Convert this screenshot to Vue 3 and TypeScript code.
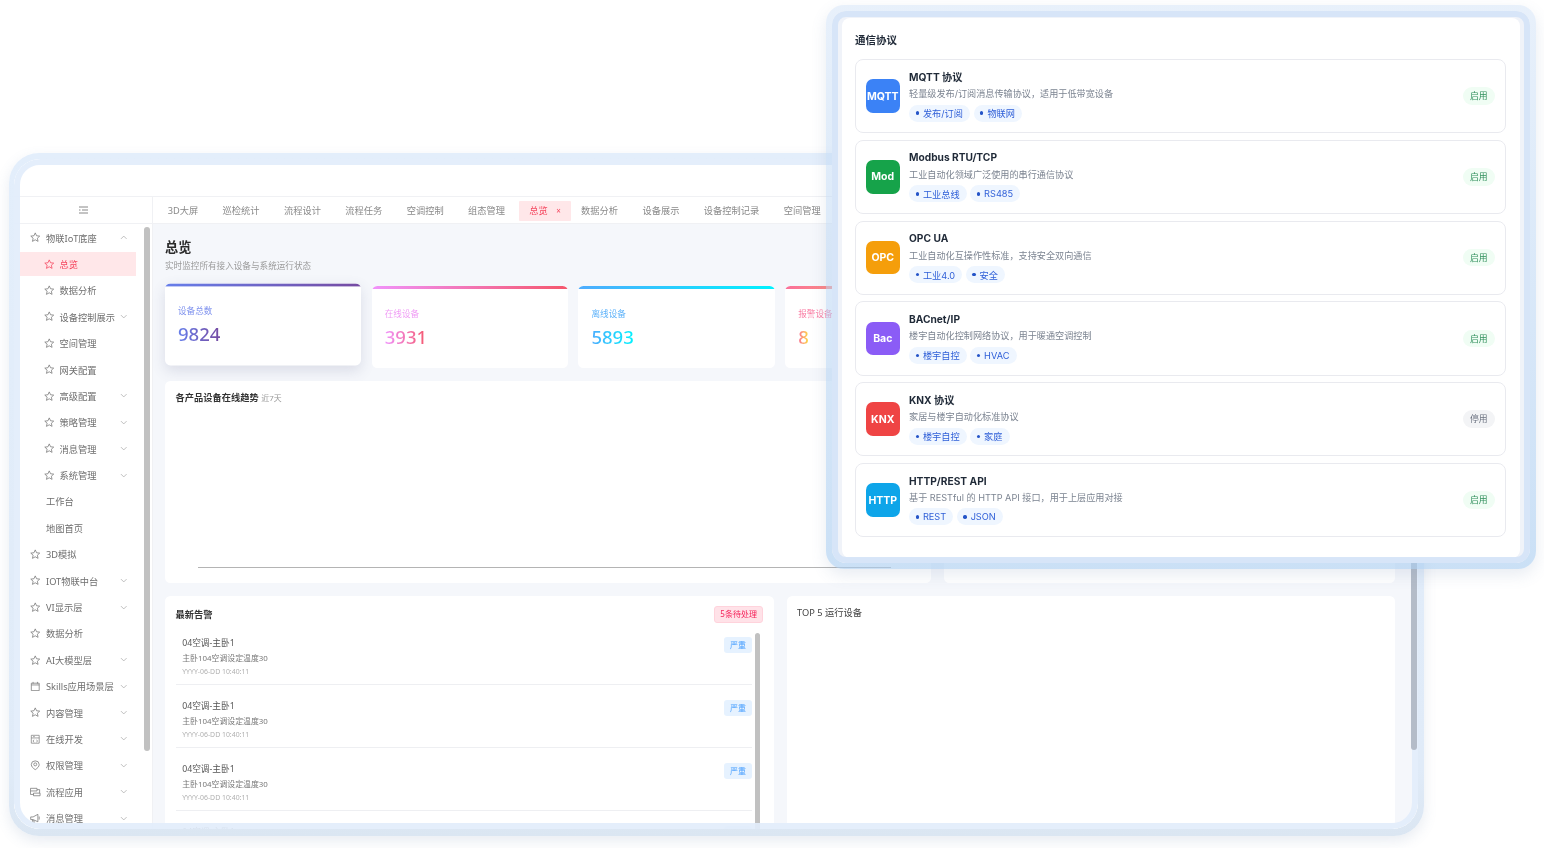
<script setup lang="ts">
interface MenuItem { label: string; icon?: string; sub?: boolean; arrow?: 'up' | 'down'; active?: boolean }

const menu: MenuItem[] = [
  { label: '物联IoT底座', icon: 'star', arrow: 'up' },
  { label: '总览', icon: 'star', sub: true, active: true },
  { label: '数据分析', icon: 'star', sub: true },
  { label: '设备控制展示', icon: 'star', sub: true, arrow: 'down' },
  { label: '空间管理', icon: 'star', sub: true },
  { label: '网关配置', icon: 'star', sub: true },
  { label: '高级配置', icon: 'star', sub: true, arrow: 'down' },
  { label: '策略管理', icon: 'star', sub: true, arrow: 'down' },
  { label: '消息管理', icon: 'star', sub: true, arrow: 'down' },
  { label: '系统管理', icon: 'star', sub: true, arrow: 'down' },
  { label: '工作台' },
  { label: '地图首页' },
  { label: '3D模拟', icon: 'star' },
  { label: 'IOT物联中台', icon: 'star', arrow: 'down' },
  { label: 'VI显示层', icon: 'star', arrow: 'down' },
  { label: '数据分析', icon: 'star' },
  { label: 'AI大模型层', icon: 'star', arrow: 'down' },
  { label: 'Skills应用场景层', icon: 'calendar', arrow: 'down' },
  { label: '内容管理', icon: 'star', arrow: 'down' },
  { label: '在线开发', icon: 'code', arrow: 'down' },
  { label: '权限管理', icon: 'pin', arrow: 'down' },
  { label: '流程应用', icon: 'flow', arrow: 'down' },
  { label: '消息管理', icon: 'horn', arrow: 'down' },
]

const tabs = ['3D大屏', '巡检统计', '流程设计', '流程任务', '空调控制', '组态管理', '总览', '数据分析', '设备展示', '设备控制记录', '空间管理']

const stats = [
  { label: '设备总数', value: '9824', cls: 'purple' },
  { label: '在线设备', value: '3931', cls: 'pink' },
  { label: '离线设备', value: '5893', cls: 'blue' },
  { label: '报警设备', value: '8', cls: 'orange' },
]

const alerts = [1, 2, 3, 4]

const protocols = [
  { short: 'MQTT', color: '#3b82f6', name: 'MQTT 协议', desc: '轻量级发布/订阅消息传输协议，适用于低带宽设备', tags: ['发布/订阅', '物联网'], on: true },
  { short: 'Mod', color: '#16a34a', name: 'Modbus RTU/TCP', desc: '工业自动化领域广泛使用的串行通信协议', tags: ['工业总线', 'RS485'], on: true },
  { short: 'OPC', color: '#f59e0b', name: 'OPC UA', desc: '工业自动化互操作性标准，支持安全双向通信', tags: ['工业4.0', '安全'], on: true },
  { short: 'Bac', color: '#8b5cf6', name: 'BACnet/IP', desc: '楼宇自动化控制网络协议，用于暖通空调控制', tags: ['楼宇自控', 'HVAC'], on: true },
  { short: 'KNX', color: '#ef4444', name: 'KNX 协议', desc: '家居与楼宇自动化标准协议', tags: ['楼宇自控', '家庭'], on: false },
  { short: 'HTTP', color: '#0ea5e9', name: 'HTTP/REST API', desc: '基于 RESTful 的 HTTP API 接口，用于上层应用对接', tags: ['REST', 'JSON'], on: true },
]
</script>

<template>
  <div class="desk">
    <section class="win back">
      <div class="screen">
        <div class="topbar"></div>
        <div class="body">
          <aside class="side">
            <div class="side-head">
              <svg width="9" height="8" viewBox="0 0 9 8" fill="none" stroke="#888" stroke-width="1"><path d="M0 1h9M3 4h6M0 4h1.500M0 7h9" /></svg>
            </div>
            <ul class="menu">
              <li v-for="(m, i) in menu" :key="i" class="item" :class="{ sub: m.sub, active: m.active }">
                <span class="ico">
                  <svg v-if="m.icon === 'star'" viewBox="0 0 12 12" fill="none" stroke="currentColor" stroke-width=".9" stroke-linejoin="round"><path d="M6 1l1.500 3.300 3.600.4-2.700 2.400.8 3.600L6 8.900l-3.200 1.800.8-3.600L.9 4.700l3.600-.4z" /></svg>
                  <svg v-else-if="m.icon === 'calendar'" viewBox="0 0 12 12" fill="none" stroke="currentColor" stroke-width=".9"><path d="M1.500 2.500h9v8.500h-9zM1.500 4.500h9M3.500 1v2M8.500 1v2" /></svg>
                  <svg v-else-if="m.icon === 'code'" viewBox="0 0 12 12" fill="none" stroke="currentColor" stroke-width=".8"><path d="M1.500 1.500h9v9h-9zM1.500 4.500h9M3.500 3h2M4.500 6.500l-1 1.500 1 1.500M7.500 6.500l1 1.500-1 1.500" /></svg>
                  <svg v-else-if="m.icon === 'pin'" viewBox="0 0 12 12" fill="none" stroke="currentColor" stroke-width=".9"><path d="M6 11C3.500 9.500 1.500 7.500 1.500 5.200a4.500 4.200 0 0 1 9 0C10.500 7.500 8.500 9.500 6 11z" /><circle cx="6" cy="5" r="1.700" /></svg>
                  <svg v-else-if="m.icon === 'flow'" viewBox="0 0 12 12" fill="none" stroke="currentColor" stroke-width=".9"><path d="M.5 1.500h7.500v3H.5zM4 7h7.500v3H4zM8 3h3v4M4 8.500H.5v-4" /></svg>
                  <svg v-else-if="m.icon === 'horn'" viewBox="0 0 12 12" fill="none" stroke="currentColor" stroke-width=".9" stroke-linejoin="round"><path d="M.8 4.500h2.700L9 1.500v8.500L3.500 7.500H.8zM2.500 7.500L3.500 11h1.500L4.200 8M10.500 4v3.500" /></svg>
                </span>
                <span class="label">{{ m.label }}</span>
                <svg v-if="m.arrow" class="arrow" viewBox="0 0 8 5" fill="none" stroke="#aaa" stroke-width=".8"><path :d="m.arrow === 'up' ? 'M1 4l3-3 3 3' : 'M1 1l3 3 3-3'" /></svg>
              </li>
            </ul>
            <div class="bar side-bar"></div>
          </aside>

          <div class="main">
            <nav class="tabs">
              <span v-for="t in tabs" :key="t" class="tab" :class="{ on: t === '总览' }">
                {{ t }}<i v-if="t === '总览'" class="x">×</i>
              </span>
            </nav>
            <div class="content">
              <h1 class="title">总览</h1>
              <p class="subtitle">实时监控所有接入设备与系统运行状态</p>

              <div class="stats">
                <div v-for="s in stats" :key="s.label" class="stat" :class="s.cls">
                  <div class="stat-label">{{ s.label }}</div>
                  <div class="stat-value">{{ s.value }}</div>
                </div>
              </div>

              <div class="row-chart">
                <div class="panel chart">
                  <div class="chart-title"><b>各产品设备在线趋势</b> <small>近7天</small></div>
                  <div class="axis"></div>
                </div>
                <div class="panel"></div>
              </div>

              <div class="row-bottom">
                <div class="panel alerts">
                  <div class="alerts-head">
                    <b>最新告警</b>
                    <span class="pill">5条待处理</span>
                  </div>
                  <div class="alerts-body">
                    <div class="alerts-list">
                      <div v-for="a in alerts" :key="a" class="alert">
                        <div class="alert-text">
                          <div class="a-name">04空调-主卧1</div>
                          <div class="a-desc">主卧104空调设定温度30</div>
                          <div class="a-time">YYYY-06-DD 10:40:11</div>
                        </div>
                        <span class="a-tag">严重</span>
                      </div>
                    </div>
                    <div class="bar list-bar"></div>
                  </div>
                </div>
                <div class="panel top5"><span>TOP 5 运行设备</span></div>
              </div>
            </div>
            <div class="bar main-bar"></div>
          </div>
        </div>
      </div>
    </section>

    <section class="win front">
      <div class="screen">
        <div class="sheet">
          <h2 class="sheet-title">通信协议</h2>
          <div class="protos">
            <article v-for="p in protocols" :key="p.short" class="proto">
              <div class="logo" :style="{ background: p.color }">{{ p.short }}</div>
              <div class="proto-info">
                <div class="p-name">{{ p.name }}</div>
                <div class="p-desc">{{ p.desc }}</div>
                <div class="p-tags">
                  <span v-for="t in p.tags" :key="t" class="p-tag"><i></i>{{ t }}</span>
                </div>
              </div>
              <span class="state" :class="{ off: !p.on }">{{ p.on ? '启用' : '停用' }}</span>
            </article>
          </div>
        </div>
      </div>
    </section>
  </div>
</template>

<style scoped>
.desk {
  position: relative;
  width: 1544px;
  height: 848px;
  overflow: hidden;
  background: #fff;
  font-family: "Noto Sans", "Noto Sans CJK SC", sans-serif;
  color: #333;
  filter: blur(0.3px);
}
.win {
  position: absolute;
  box-sizing: border-box;
  padding: 6px;
}
.screen {
  position: relative;
  height: 100%;
  overflow: hidden;
  background: #fff;
}
.screen::after {
  content: "";
  position: absolute;
  inset: 0;
  border-radius: inherit;
  border: 6px solid rgba(226, 237, 251, 0.92);
  pointer-events: none;
}
.back {
  left: 9px;
  top: 153px;
  width: 1415px;
  height: 683px;
  padding: 6px 6px 7px 5px;
  border-radius: 30px;
  background: linear-gradient(#e3eefb, #e0ebf8 90%, #dbe6f2);
  box-shadow: 0 5px 14px rgba(90, 120, 160, 0.14);
}
.back .screen { border-radius: 26px; display: flex; flex-direction: column; }
.topbar { height: 38px; flex: none; border-bottom: 1px solid #f0f1f4; box-sizing: border-box; }
.body { flex: 1; display: flex; min-height: 0; }

.side {
  position: relative;
  width: 139px;
  flex: none;
  box-sizing: border-box;
  border-right: 1px solid #f0f1f4;
  background: #fff;
}
.side-head {
  height: 27px;
  box-sizing: border-box;
  border-bottom: 1px solid #f0f1f4;
  display: flex;
  align-items: center;
  justify-content: center;
}
.menu { list-style: none; margin: 0.4px 0 0; padding: 0; }
.item {
  position: relative;
  height: 26.4px;
  display: flex;
  align-items: center;
  margin-left: 6px;
  margin-right: 16px;
  padding-left: 10px;
  font-size: 9.25px;
  color: #6f6f6f;
  white-space: nowrap;
}
.item.sub { padding-left: 23.5px; }
.item.active { color: #f5475f; background: #ffe7e9; height: 24px; margin: 1.2px 16px 1.2px 6px; }
.ico { width: 10.5px; height: 10.5px; margin-right: 5.5px; flex: none; display: block; color: #7a7a7a; }
.active .ico { color: #f5475f; }
.ico svg { width: 100%; height: 100%; display: block; }
.arrow { position: absolute; right: 9px; top: 50%; width: 7.5px; height: 5px; margin-top: -2.5px; }
.side-bar { left: 130px; top: 30px; height: 524px; }
.bar {
  position: absolute;
  width: 5.5px;
  border-radius: 3px;
  background: #c1c1c1;
}

.main { position: relative; flex: 1; min-width: 0; display: flex; flex-direction: column; background: #f5f7fb; }
.tabs {
  height: 27px;
  flex: none;
  box-sizing: border-box;
  background: #fff;
  border-bottom: 1px solid #f0f1f4;
  display: flex;
  align-items: center;
  padding-left: 2.5px;
  white-space: nowrap;
}
.tab { padding: 0 12.2px; font-size: 9.25px; color: #8a8a8a; line-height: 20px; height: 20px; margin-top: 1px; }
.tab.on { background: #ffe7e9; color: #f5475f; margin: 1px -2px 0 2px; border-radius: 1px; padding: 0 10px; }
.x { font-style: normal; margin-left: 8.5px; font-size: 8px; }
.content { flex: 1; padding: 13.5px 0 0 12px; width: 1230px; }
.title { margin: 0; font-size: 13.2px; line-height: 19px; font-weight: 700; color: #2b2b2b; }
.subtitle { margin: 3px 0 0; font-size: 8.6px; line-height: 12px; color: #9a9a9a; }
.stats { margin-top: 14.5px; display: grid; grid-template-columns: repeat(6, 1fr); gap: 10.4px; height: 82px; }
.stat {
  position: relative;
  overflow: hidden;
  background: #fff;
  border-radius: 5.3px;
  padding: 22px 13px 0;
  box-sizing: border-box;
}
.stat::before { content: ""; position: absolute; left: 0; right: 0; top: 0; height: 3px; background: var(--grad); }
.stat.purple { --grad: linear-gradient(90deg, #667eea, #764ba2); --c: #7f92ee; transform: translateY(-2.6px); box-shadow: 0 5px 14px rgba(80, 90, 130, 0.16); }
.stat.pink { --grad: linear-gradient(90deg, #f093fb, #f5576c); --c: #f09df5; }
.stat.blue { --grad: linear-gradient(90deg, #4facfe, #00f2fe); --c: #5fb3fa; }
.stat.orange { --grad: linear-gradient(90deg, #fa709a, #fee140); --c: #fa7fa5; }
.stat-label { font-size: 8.6px; line-height: 12px; color: var(--c); }
.stat-value {
  margin-top: 5.4px;
  font-size: 18.5px;
  line-height: 24px;
  font-weight: 500;
  width: max-content;
  background: var(--grad);
  -webkit-background-clip: text;
  background-clip: text;
  color: transparent;
}
.row-chart { margin-top: 13px; display: grid; grid-template-columns: 766px 451px; gap: 13px; height: 202px; }
.panel { background: #fff; border-radius: 5.3px; position: relative; }
.chart { padding: 10.4px 10.6px; box-sizing: border-box; }
.chart-title { font-size: 9.25px; line-height: 13px; color: #333; }
.chart-title small { font-size: 7.9px; color: #999; }
.axis { position: absolute; left: 33px; top: 186px; width: 693px; height: 1px; background: #b4b4b4; }
.row-bottom { margin-top: 13px; display: grid; grid-template-columns: 1fr 1fr; gap: 13px; height: 300px; }
.alerts { padding: 10px 10.6px 0; box-sizing: border-box; overflow: hidden; }
.alerts-head { display: flex; align-items: center; justify-content: space-between; height: 16.6px; font-size: 9.25px; color: #333; }
.alerts-head b { margin-top: -1.4px; }
.pill {
  box-sizing: border-box;
  height: 16.6px;
  line-height: 14.6px;
  padding: 0 5px;
  border: 1px solid #ffd3dc;
  border-radius: 3px;
  background: #ffe2e8;
  color: #f5225a;
  font-size: 8px;
}
.alerts-body { position: relative; margin-top: 10.4px; padding-right: 10.6px; }
.alert {
  display: flex;
  justify-content: space-between;
  align-items: flex-start;
  height: 52px;
  box-sizing: border-box;
  padding: 4.4px 0 0 6.6px;
  margin-bottom: 11px;
  border-bottom: 1px solid #eeeff2;
}
.a-name { font-size: 8.7px; line-height: 12px; color: #555; }
.a-desc { margin-top: 3px; font-size: 7.9px; line-height: 12px; color: #777; }
.a-time { margin-top: 2.6px; font-size: 6.9px; line-height: 10px; color: #b0b0b0; }
.a-tag {
  width: 28.6px;
  height: 16px;
  margin-top: -0.4px;
  line-height: 16px;
  text-align: center;
  border-radius: 3px;
  background: #e6f2ff;
  color: #4aa0ff;
  font-size: 8px;
}
.list-bar { left: 579px; top: 0; height: 210px; }
.top5 { padding: 10px 10.6px; box-sizing: border-box; font-size: 9.25px; line-height: 13px; color: #444; }
.main-bar { left: 1258px; top: 1px; height: 552px; background: #b4bcc8; z-index: 2; }

.front {
  z-index: 3;
  left: 826px;
  top: 5px;
  width: 710px;
  height: 564px;
  border-radius: 18px;
  background: linear-gradient(rgba(200, 220, 245, 0.42), rgba(170, 205, 240, 0.62));
  box-shadow: 0 6px 16px rgba(90, 120, 160, 0.14);
}
.front .screen { border-radius: 14px; padding: 6px; box-sizing: border-box; background: #f0f3f9; }
.front .screen::after { border-color: rgba(212, 227, 247, 0.9); border-radius: 14px; }
.sheet {
  height: 100%;
  margin: 1px 4px 0;
  box-sizing: border-box;
  background: #fff;
  border-radius: 8px;
  padding: 15px 14px 0 13px;
}
.sheet-title { margin: 0 0 12px; font-size: 10.5px; line-height: 14px; font-weight: 700; color: #1f2937; }
.protos { display: flex; flex-direction: column; gap: 6.6px; font-family: Inter, "Noto Sans CJK SC", sans-serif; }
.proto {
  height: 74.2px;
  box-sizing: border-box;
  border: 1px solid #e9eaef;
  border-radius: 8px;
  padding: 0 10.5px 0 10px;
  display: flex;
  align-items: center;
}
.logo {
  width: 33.5px;
  height: 33.5px;
  flex: none;
  border-radius: 7px;
  color: #fff;
  font-size: 10.5px;
  font-weight: 700;
  display: flex;
  align-items: center;
  justify-content: center;
  white-space: nowrap;
}
.proto-info { flex: 1; margin-left: 9.5px; min-width: 0; }
.p-name { font-size: 10.2px; line-height: 13px; font-weight: 700; color: #1f2937; }
.p-desc { margin-top: 3.4px; font-size: 9.15px; line-height: 13px; color: #7c8491; }
.p-tags { margin-top: 4.6px; display: flex; gap: 3.4px; }
.p-tag {
  display: flex;
  align-items: center;
  height: 17px;
  padding: 0 7.2px 0 6.5px;
  border-radius: 9px;
  background: #eff6ff;
  color: #2f5fd8;
  font-size: 9.2px;
}
.p-tag i { width: 3.4px; height: 3.4px; border-radius: 50%; background: #2454c8; margin-right: 4px; }
.state {
  width: 31.5px;
  height: 17.5px;
  line-height: 17.5px;
  text-align: center;
  border-radius: 9px;
  background: #f0fdf4;
  color: #2f8f5b;
  font-size: 8.8px;
}
.state.off { background: #f3f4f6; color: #6b7280; }
</style>
